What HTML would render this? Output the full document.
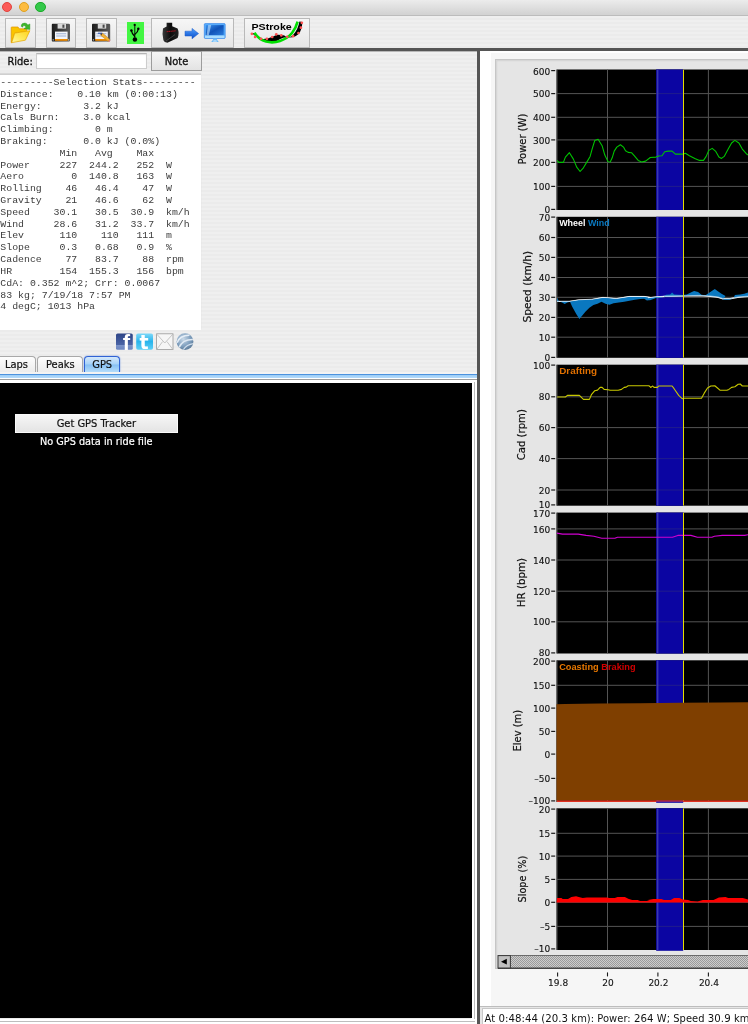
<!DOCTYPE html>
<html><head><meta charset="utf-8"><title>Ride</title>
<style>
*{box-sizing:border-box;margin:0;padding:0}
html,body{width:748px;height:1024px;overflow:hidden}
body{position:relative;font-family:"DejaVu Sans Condensed","DejaVu Sans","Liberation Sans",sans-serif;font-stretch:condensed;background:#ececec;
 background-image:repeating-linear-gradient(to bottom,#efefef 0,#efefef 2px,#ebebeb 2px,#ebebeb 4px);color:#111}
.abs{position:absolute}
#w{position:absolute;left:0;top:0;width:748px;height:1024px;will-change:transform;overflow:hidden}
#title{left:0;top:0;width:748px;height:16px;background:linear-gradient(#ececec,#d3d3d3 94%);border-bottom:1px solid #bcbcbc}
.tl{position:absolute;top:1.6px;width:10.4px;height:10.4px;border-radius:50%}
.tbtn{position:absolute;top:18px;height:29.5px;border:1px solid #b9b9b9;background:linear-gradient(#f6f6f6,#e6e6e6);}
#hline{left:0;top:48px;width:748px;height:3px;background:#555}
#vline{left:477px;top:48px;width:3px;height:976px;background:#555}
#right{left:480px;top:51.4px;width:268px;height:973px;background:#fff}
#cbox{left:495.3px;top:59px;width:260px;height:910px;background:#e5e5e5;border:1.4px solid #c6c6c6;box-shadow:inset 0 0 0 1.3px #d6d6d6}
#xax{left:491px;top:53.4px;width:260px;height:953px;background:#f6f6f6}
#status{left:480px;top:1006px;width:268px;height:18px;background:#e6e6e6;border-top:1.5px solid #bdbdbd}
#sfield{left:482px;top:1008px;width:270px;height:18px;background:#fff;border:1px solid #c8c8c8;font:11px "DejaVu Sans Condensed","DejaVu Sans","Liberation Sans",sans-serif;white-space:nowrap;padding:3px 0 0 1.6px;color:#111;letter-spacing:0.06px;font-stretch:condensed}
#sfield i{font-style:normal;font-stretch:normal;font-size:10.2px;font-family:"DejaVu Sans","Liberation Sans",sans-serif}
#ride{left:7.4px;top:55px;font-size:11px;color:#111;-webkit-text-stroke:0.3px #111}
#rfield{left:35.5px;top:53.4px;width:111.4px;height:15.6px;background:#fff;border:1px solid #cdcdcd;border-top-color:#b4b4b4;box-shadow:inset 0 1px 1px #e4e4e4}
#note{left:151.4px;top:51.4px;width:50.4px;height:19.4px;border:1px solid #9c9c9c;background:linear-gradient(#f5f5f5,#e3e3e3);font-size:11px;text-align:center;line-height:20px;-webkit-text-stroke:0.3px #111}
#stats{left:0;top:74px;width:201px;height:255.5px;background:#fff;border-top:1px solid #cfcfcf;box-shadow:0 -1px 1px #d8d8d8}
#stats pre{font-family:"Liberation Mono","DejaVu Sans Mono",monospace;font-size:9.87px;line-height:11.82px;color:#3c3c3c;padding:1.9px 0 0 0.3px;white-space:pre}
.tab{position:absolute;top:356.4px;height:15.8px;border:1px solid #a8a8a8;border-bottom:none;border-radius:4px 4px 0 0;background:linear-gradient(#fdfdfd,#ececec);font-size:11px;text-align:center;line-height:15.4px;-webkit-text-stroke:0.2px #111}
#gps{left:0;top:382.5px;width:472.2px;height:635.8px;background:#000}
#gbtn{left:15px;top:413.6px;width:162.6px;height:19px;background:linear-gradient(#f6f6f6,#e4e4e4);border:1px solid #fafafa;font-size:11px;text-align:center;line-height:17.4px;color:#111;-webkit-text-stroke:0.2px #111}
#nogps{left:15px;top:435px;width:162.6px;text-align:center;color:#fff;font-size:10.8px;-webkit-text-stroke:0.2px #fff}
svg.chart{position:absolute;left:0;top:0}
svg .tk{font:9px "DejaVu Sans","Liberation Sans",sans-serif;fill:#111;stroke:#111;stroke-width:0.12px}
svg .ttl{font:10px "DejaVu Sans","Liberation Sans",sans-serif;fill:#111;stroke:#111;stroke-width:0.2px}
svg .lg{font:bold 9px "Liberation Sans","DejaVu Sans",sans-serif}
</style></head>
<body>
<div id="w">
<div id="title" class="abs">
 <div class="tl" style="left:1.8px;background:#fc5b57;border:0.5px solid #e0443e"></div>
 <div class="tl" style="left:18.5px;background:#fdbc40;border:0.5px solid #dea123"></div>
 <div class="tl" style="left:35.4px;background:#34c84a;border:0.5px solid #1aab29"></div>
</div>
<div class="tbtn" style="left:5.2px;width:30.8px"></div>
<div class="tbtn" style="left:46.2px;width:30px"></div>
<div class="tbtn" style="left:86.4px;width:30.6px"></div>
<div class="tbtn" style="left:151.2px;width:82.6px"></div>
<div class="tbtn" style="left:244.4px;width:66px"></div>
<div class="abs" style="left:127px;top:22px;width:17px;height:22px;background:#42f642"></div>
<svg class="abs" style="left:0;top:0" width="748" height="52" viewBox="0 0 748 52">
<defs>
<linearGradient id="fy" x1="0" y1="1" x2="1" y2="0"><stop offset="0" stop-color="#fff9a8"/><stop offset="0.45" stop-color="#ffe95a"/><stop offset="1" stop-color="#ffd21a"/></linearGradient>
<linearGradient id="fb" x1="0" y1="0" x2="1" y2="0"><stop offset="0" stop-color="#1c1c1c"/><stop offset="0.5" stop-color="#3c3c3c"/><stop offset="1" stop-color="#5c5c5c"/></linearGradient>
<linearGradient id="mon" x1="0" y1="0" x2="1" y2="1"><stop offset="0" stop-color="#3a92ee"/><stop offset="0.5" stop-color="#0f52b8"/><stop offset="1" stop-color="#2a7cdc"/></linearGradient>
<linearGradient id="arr" x1="0" y1="0" x2="0" y2="1"><stop offset="0" stop-color="#4ea0ff"/><stop offset="1" stop-color="#0a4cc8"/></linearGradient>
<linearGradient id="dev" x1="0" y1="0" x2="1" y2="0"><stop offset="0" stop-color="#3a3a3a"/><stop offset="0.5" stop-color="#0c0c0c"/><stop offset="1" stop-color="#222"/></linearGradient>

</defs>
<!-- folder -->
<path d="M11.2,27.5 Q11.2,27 11.8,27 H18 L19.2,28.8 H26.2 Q26.8,28.8 26.8,29.6 V31.4 L14.7,33.2 L11.7,42.7 H11.2Z" fill="#fac400" stroke="#dd9400" stroke-width="0.7"/>
<path d="M14.7,33.1 L29.9,30.7 L25.4,40.2 L11.7,42.7Z" fill="url(#fy)" stroke="#e6a600" stroke-width="0.7"/>
<path d="M21.1,26.2 Q21.4,22.8 25,23 Q27.2,23.3 27.8,25 L29.9,23.9 L29.9,29.5 L23.9,28.7 L26,27.2 Q25.4,25.5 23.9,25.5 Q22.6,25.7 22.8,27.2Z" fill="#3eb62c" stroke="#2c9222" stroke-width="0.4"/>
<!-- floppies -->
<g transform="translate(51.8,23.8)">
 <path d="M0.8,0 H17 Q18.2,0 18.2,1.2 V16.6 Q18.2,17.6 17,17.6 H0.8 Q0,17.6 0,16.6 V1 Q0,0 0.8,0Z" fill="url(#fb)"/>
 <rect x="5.8" y="0" width="8.4" height="4.8" fill="#d9d9d9"/>
 <rect x="10.6" y="0.8" width="2" height="3.2" fill="#4a4a4a"/>
 <rect x="3.2" y="7.8" width="12.6" height="7.6" fill="#f4f6fa"/>
 <rect x="4.4" y="9.6" width="10" height="0.8" fill="#8aa0c8"/>
 <rect x="4.4" y="11.8" width="10" height="0.8" fill="#8aa0c8"/>
 <rect x="3.2" y="15.2" width="12.6" height="1.8" fill="#f08c00"/>
 <rect x="0.8" y="15.6" width="1.2" height="1" fill="#ddd"/><rect x="16.2" y="15.6" width="1.2" height="1" fill="#ddd"/>
</g>
<g transform="translate(92,23.8)">
 <path d="M0.8,0 H17 Q18.2,0 18.2,1.2 V16.6 Q18.2,17.6 17,17.6 H0.8 Q0,17.6 0,16.6 V1 Q0,0 0.8,0Z" fill="url(#fb)"/>
 <rect x="5.8" y="0" width="8.4" height="4.8" fill="#d9d9d9"/>
 <rect x="10.6" y="0.8" width="2" height="3.2" fill="#4a4a4a"/>
 <rect x="3.2" y="7.8" width="12.6" height="7.6" fill="#f4f6fa"/>
 <rect x="4.4" y="9.6" width="10" height="0.8" fill="#8aa0c8"/>
 <rect x="4.4" y="11.8" width="10" height="0.8" fill="#8aa0c8"/>
 <rect x="3.2" y="15.2" width="12.6" height="1.8" fill="#f08c00"/>
 <rect x="0.8" y="15.6" width="1.2" height="1" fill="#ddd"/><rect x="16.2" y="15.6" width="1.2" height="1" fill="#ddd"/>
</g>
<path d="M100.6,33.6 L102.6,33.2 L109.8,39.4 L108.2,41.4 L101,35.6Z" fill="#f2b234" stroke="#b87818" stroke-width="0.5"/>
<path d="M100.6,33.6 L102.6,33.2 L101,35.6Z" fill="#333"/>
<path d="M109.8,39.4 L110.4,40.6 L109.4,41.8 L108.2,41.4Z" fill="#e87a8a"/>
<path d="M98,33.2 h4" stroke="#2a50b0" stroke-width="1"/>
<!-- usb -->
<g stroke="#000" fill="none" stroke-linecap="round">
<path d="M134.8,25.4 V37.4" stroke-width="0.9"/>
<path d="M131.5,31 Q131.9,33.6 134.6,36.2" stroke-width="1.3"/>
<path d="M138.3,29.2 Q138,31.8 134.9,34.2" stroke-width="1.3"/>
</g>
<circle cx="134.9" cy="39.5" r="2.25" fill="#000"/>
<circle cx="131.4" cy="30.5" r="1.25" fill="#000"/>
<circle cx="138.3" cy="28.7" r="1.25" fill="#000"/>
<circle cx="134.7" cy="24.9" r="1.15" fill="#000"/>
<!-- device -->
<path d="M166.6,22.8 H172.2 V26.2 L177.6,28.4 Q179.6,33 177.6,38 L167.4,42.8 Q164.2,42.6 163.4,40.2 Q161.8,34 163,28.4 L166.6,26.4Z" fill="url(#dev)"/>
<path d="M166,41 L175,34.6" stroke="#5a5a5a" stroke-width="0.9" stroke-opacity="0.7"/>
<path d="M166.6,31.7 L175.6,30.8" stroke="#a81420" stroke-width="1.1" stroke-dasharray="1.5 0.4"/>
<!-- arrow -->
<path d="M185,31.2 H192 V28.4 L198.6,33.6 L192,38.8 V36 H185Z" fill="url(#arr)" stroke="#1a58c8" stroke-width="0.5"/>
<!-- monitor -->
<rect x="204.3" y="23.6" width="20.9" height="14.8" rx="0.9" fill="#58aefc" stroke="#2a7ae6" stroke-width="0.6"/>
<rect x="205.8" y="25.1" width="17.9" height="10.2" fill="url(#mon)"/>
<rect x="205" y="35.5" width="19.5" height="2.5" fill="#a8dcff"/>
<path d="M208.2,25.1 h3 l-2.4,10.2 h-2.3Z" fill="#c4e4ff" fill-opacity="0.6"/>
<path d="M213.2,38.4 h3.6 l0.4,1.6 l1.6,2 h-7.6 l1.6,-2Z" fill="#6cbcfa"/>
<path d="M213.6,40.6 h2.8 l0.6,0.9 h-4Z" fill="#e6f4ff"/>
<!-- pstroke -->
<path d="M254,33 Q258,39 266,41.4 Q270,42.8 275,42 Q280,39 284,37.6 Q290,38 293,35 Q298,30 299.4,21.6 L302.4,22 Q302,30 298.6,34 Q294,38.4 287,37.4 Q284,34.6 281,35 Q277,33.8 273,36.6 Q268,39.4 262,39 Q256,37 252.4,33.4Z" fill="#000"/>
<path d="M254.4,32.8 Q258.6,39.4 266,41.6 Q273,43.4 280,41 Q287.6,38.4 292,33 Q296,28 297.6,21.6" fill="none" stroke="#00e000" stroke-width="2.6"/>
<g fill="#ff5252">
<circle cx="251.9" cy="33.8" r="1.35"/><circle cx="255.1" cy="37" r="1.35"/><circle cx="261" cy="38.8" r="1.35"/><circle cx="266.9" cy="38.8" r="1.35"/><circle cx="272.2" cy="37" r="1.35"/><circle cx="276.3" cy="34.3" r="1.35"/><circle cx="281.3" cy="35.4" r="1.35"/><circle cx="287.2" cy="36.8" r="1.35"/><circle cx="293.1" cy="36.2" r="1.35"/><circle cx="298.4" cy="33" r="1.35"/><circle cx="300.9" cy="27.7" r="1.35"/><circle cx="301.8" cy="22.8" r="1.35"/>
</g>
<text x="251.4" y="30.2" font-family="Liberation Sans, sans-serif" font-weight="bold" font-size="9.8" textLength="40.4" lengthAdjust="spacingAndGlyphs" fill="#000">PStroke</text>
</svg>

<div id="hline" class="abs"></div>
<div class="abs" style="left:0;top:51px;width:748px;height:1px;background:rgba(85,85,85,0.35)"></div>
<div id="ride" class="abs">Ride:</div>
<div id="rfield" class="abs"></div>
<div id="note" class="abs">Note</div>
<div id="stats" class="abs"><pre>---------Selection Stats---------
Distance:    0.10 km (0:00:13)
Energy:       3.2 kJ
Cals Burn:    3.0 kcal
Climbing:       0 m
Braking:      0.0 kJ (0.0%)
          Min   Avg    Max
Power     227  244.2   252  W
Aero        0  140.8   163  W
Rolling    46   46.4    47  W
Gravity    21   46.6    62  W
Speed    30.1   30.5  30.9  km/h
Wind     28.6   31.2  33.7  km/h
Elev      110    110   111  m
Slope     0.3   0.68   0.9  %
Cadence    77   83.7    88  rpm
HR        154  155.3   156  bpm
CdA: 0.352 m^2; Crr: 0.0067
83 kg; 7/19/18 7:57 PM
4 degC; 1013 hPa</pre></div>
<svg class="abs" style="left:110px;top:328px" width="90" height="28" viewBox="110 328 90 28">
<defs>
<linearGradient id="fbg" x1="0" y1="0" x2="0" y2="1"><stop offset="0" stop-color="#2d4486"/><stop offset="0.7" stop-color="#4a64a6"/><stop offset="0.72" stop-color="#7a92c8"/><stop offset="1" stop-color="#6c86c0"/></linearGradient>
<linearGradient id="twg" x1="0" y1="0" x2="0" y2="1"><stop offset="0" stop-color="#7fd8f8"/><stop offset="0.5" stop-color="#28b4ec"/><stop offset="1" stop-color="#5fd0f6"/></linearGradient>
<radialGradient id="glb" cx="0.4" cy="0.35" r="0.7"><stop offset="0" stop-color="#c9d9e8"/><stop offset="0.6" stop-color="#7f9fbe"/><stop offset="1" stop-color="#5a7896"/></radialGradient>
</defs>
<rect x="116" y="333.4" width="16.8" height="16.4" rx="1.6" fill="url(#fbg)"/>
<text x="122.8" y="350.2" font-family="Liberation Sans, sans-serif" font-weight="bold" font-size="22" fill="#fff">f</text>
<rect x="136.2" y="333.4" width="16.8" height="16.4" rx="1.8" fill="url(#twg)"/>
<text x="139.4" y="348.6" font-family="DejaVu Sans, sans-serif" font-stretch="normal" font-weight="bold" font-size="19" fill="#fff">t</text>
<rect x="156.6" y="333.8" width="16.4" height="15.8" fill="#f6f6f6" stroke="#9a9a9a" stroke-width="0.8"/>
<path d="M156.8,334.2 L164.8,343 L172.8,334.2 M156.8,349.4 L162.6,341.6 M172.8,349.4 L167,341.6" fill="none" stroke="#b8b8b8" stroke-width="0.8"/>
<circle cx="185" cy="341.6" r="8.4" fill="url(#glb)"/>
<clipPath id="gc"><circle cx="185" cy="341.6" r="8.4"/></clipPath>
<g clip-path="url(#gc)"><g transform="rotate(-28 185 341.6)">
<path d="M177.4,339 Q183,333.6 192,338" fill="none" stroke="#e4edf6" stroke-width="1.6"/>
<path d="M177,344 Q184,338.4 193.2,343.6" fill="none" stroke="#dfe9f3" stroke-width="1.6"/>
<path d="M179.6,348 Q185,345 191.4,347.4" fill="none" stroke="#d0deec" stroke-width="1.2"/>
</g></g>
</svg>

<div class="tab" style="left:-3px;width:38.8px;padding-left:0px">Laps</div>
<div class="tab" style="left:37.4px;width:45.8px">Peaks</div>
<div class="tab" style="left:84px;width:36.4px;border-color:#2f62d4;background:linear-gradient(#d4e8fb,#a6d2f8 48%,#86c0f4 52%,#b4dcfa);box-shadow:0 0 1.5px #3b6fdc">GPS</div>
<div class="abs" style="left:0;top:372.4px;width:477px;height:1.6px;background:#f3f3f3"></div>
<div class="abs" style="left:0;top:374px;width:477px;height:1.1px;background:#4c92de"></div>
<div class="abs" style="left:0;top:375.1px;width:477px;height:3px;background:linear-gradient(#9ccdf6,#b4dafa)"></div>
<div class="abs" style="left:0;top:378.1px;width:477px;height:5px;background:#fff"></div>
<div class="abs" style="left:0;top:379.3px;width:477px;height:1.1px;background:#9c9c9c"></div>
<div class="abs" style="left:471.4px;top:382px;width:5.6px;height:642px;background:#fff"></div>
<div class="abs" style="left:474px;top:382px;width:1px;height:640px;background:#bdbdbd"></div>
<div class="abs" style="left:0;top:1019px;width:477px;height:5px;background:#fff"></div>
<div class="abs" style="left:0;top:1021px;width:475px;height:1px;background:#bdbdbd"></div>
<div id="gps" class="abs"></div>
<div id="gbtn" class="abs">Get GPS Tracker</div>
<div id="nogps" class="abs">No GPS data in ride file</div>
<div id="vline" class="abs"></div>
<div id="right" class="abs"></div>
<div id="xax" class="abs"></div>
<div id="cbox" class="abs"></div>
<div id="status" class="abs"></div>
<div id="sfield" class="abs">At <i>0:48:44</i> (<i>20.3</i> km): Power: <i>264</i> W; Speed <i>30.9</i> km/h; Wind <i>31.0</i> km/h</div>
<svg class="chart" width="748" height="1024" viewBox="0 0 748 1024">
<defs><pattern id="dith" width="2" height="2" patternUnits="userSpaceOnUse"><rect width="2" height="2" fill="#cccccc"/><rect width="1" height="1" fill="#9a9a9a"/><rect x="1" y="1" width="1" height="1" fill="#9a9a9a"/></pattern>
<clipPath id="cp0"><rect x="556.5" y="69.5" width="200" height="140.5"/></clipPath>
<clipPath id="cp1"><rect x="556.5" y="216.8" width="200" height="141.0"/></clipPath>
<clipPath id="cp2"><rect x="556.5" y="364.7" width="200" height="141.0"/></clipPath>
<clipPath id="cp3"><rect x="556.5" y="512.6" width="200" height="140.9"/></clipPath>
<clipPath id="cp4"><rect x="556.5" y="660.3" width="200" height="141.7"/></clipPath>
<clipPath id="cp5"><rect x="556.5" y="808.3" width="200" height="141.7"/></clipPath>
</defs>
<rect x="556.5" y="69.5" width="200" height="140.5" fill="#000"/>
<rect x="656.2" y="69.5" width="27" height="140.5" fill="#0b06a2"/>
<g clip-path="url(#cp0)">
<line x1="556.5" x2="748" y1="93.6" y2="93.6" stroke="#545454" stroke-width="1"/>
<line x1="556.5" x2="748" y1="117.3" y2="117.3" stroke="#545454" stroke-width="1"/>
<line x1="556.5" x2="748" y1="139.9" y2="139.9" stroke="#545454" stroke-width="1"/>
<line x1="556.5" x2="748" y1="162.4" y2="162.4" stroke="#545454" stroke-width="1"/>
<line x1="556.5" x2="748" y1="186.4" y2="186.4" stroke="#545454" stroke-width="1"/>
<line x1="607.5" x2="607.5" y1="69.5" y2="210.0" stroke="#545454" stroke-width="1"/>
<line x1="708.4" x2="708.4" y1="69.5" y2="210.0" stroke="#545454" stroke-width="1"/>
<line x1="557" x2="557" y1="69.5" y2="210.0" stroke="#545454" stroke-width="1"/>
<rect x="656.2" y="69.5" width="27" height="140.5" fill="#0b06a2" fill-opacity="0.72"/>
<line x1="657.6" x2="657.6" y1="69.5" y2="210.0" stroke="#3a38b0" stroke-width="1.6"/>
<path d="M557.1,160.4 L558.7,162.4 L563.4,162.4 L565.4,157.1 L569.4,152.7 L573.4,159.1 L576.7,167.1 L580.1,171.5 L583.4,167.8 L587.4,161.1 L590.1,156.4 L592.1,149.1 L594.8,140.4 L598.1,139.3 L602.1,145.7 L604.8,155.1 L608.1,161.8 L610.2,162.0 L612.2,157.8 L614.2,151.1 L616.8,147.1 L620.4,144.7 L623.5,147.1 L625.5,150.7 L628.2,152.4 L631.5,152.7 L634.2,155.7 L638.2,160.4 L641.6,162.0 L645.6,161.1 L650.3,157.5 L650.0,157.5 L656.0,157.1 L658.7,156.0 L662.0,155.7 L664.7,151.7 L668.1,151.1 L672.1,151.1 L675.4,154.1 L683.4,154.1 L685.4,153.3 L689.4,155.7 L694.8,158.4 L699.5,160.4 L703.5,160.4 L706.2,156.4 L708.8,150.4 L712.2,148.4 L715.5,151.1 L718.9,157.1 L721.5,158.4 L724.2,156.4 L728.2,149.1 L731.6,143.0 L734.9,140.4 L738.9,143.0 L742.3,149.1 L746.3,153.7 L749.6,156.0" fill="none" stroke="#00c400" stroke-width="1.1" stroke-linejoin="round"/>
<line x1="683.5" x2="683.5" y1="69.5" y2="210.0" stroke="#e6de00" stroke-width="1"/>
</g>
<line x1="551.2" x2="555.2" y1="70.6" y2="70.6" stroke="#1a1a1a" stroke-width="1.2"/>
<text class="tk" x="550.2" y="74.9" text-anchor="end">600</text>
<line x1="551.2" x2="555.2" y1="93.6" y2="93.6" stroke="#1a1a1a" stroke-width="1.2"/>
<text class="tk" x="550.2" y="97.2" text-anchor="end">500</text>
<line x1="551.2" x2="555.2" y1="117.3" y2="117.3" stroke="#1a1a1a" stroke-width="1.2"/>
<text class="tk" x="550.2" y="120.9" text-anchor="end">400</text>
<line x1="551.2" x2="555.2" y1="139.9" y2="139.9" stroke="#1a1a1a" stroke-width="1.2"/>
<text class="tk" x="550.2" y="143.5" text-anchor="end">300</text>
<line x1="551.2" x2="555.2" y1="162.4" y2="162.4" stroke="#1a1a1a" stroke-width="1.2"/>
<text class="tk" x="550.2" y="166.0" text-anchor="end">200</text>
<line x1="551.2" x2="555.2" y1="186.4" y2="186.4" stroke="#1a1a1a" stroke-width="1.2"/>
<text class="tk" x="550.2" y="190.0" text-anchor="end">100</text>
<line x1="551.2" x2="555.2" y1="209.4" y2="209.4" stroke="#1a1a1a" stroke-width="1.2"/>
<text class="tk" x="550.2" y="212.7" text-anchor="end">0</text>
<text class="ttl" transform="translate(525.6,164.6) rotate(-90)" textLength="50.9" lengthAdjust="spacingAndGlyphs">Power (W)</text>
<rect x="556.5" y="216.8" width="200" height="141.0" fill="#000"/>
<rect x="656.2" y="216.8" width="27" height="141.0" fill="#0b06a2"/>
<g clip-path="url(#cp1)">
<line x1="556.5" x2="748" y1="237.5" y2="237.5" stroke="#545454" stroke-width="1"/>
<line x1="556.5" x2="748" y1="257.4" y2="257.4" stroke="#545454" stroke-width="1"/>
<line x1="556.5" x2="748" y1="277.5" y2="277.5" stroke="#545454" stroke-width="1"/>
<line x1="556.5" x2="748" y1="297.3" y2="297.3" stroke="#545454" stroke-width="1"/>
<line x1="556.5" x2="748" y1="317.4" y2="317.4" stroke="#545454" stroke-width="1"/>
<line x1="556.5" x2="748" y1="337.2" y2="337.2" stroke="#545454" stroke-width="1"/>
<line x1="607.5" x2="607.5" y1="216.8" y2="357.8" stroke="#545454" stroke-width="1"/>
<line x1="708.4" x2="708.4" y1="216.8" y2="357.8" stroke="#545454" stroke-width="1"/>
<line x1="557" x2="557" y1="216.8" y2="357.8" stroke="#545454" stroke-width="1"/>
<rect x="656.2" y="216.8" width="27" height="141.0" fill="#0b06a2" fill-opacity="0.72"/>
<line x1="657.6" x2="657.6" y1="216.8" y2="357.8" stroke="#3a38b0" stroke-width="1.6"/>
<path d="M557.1,301.5 L569.4,301.5 L578.7,300.1 L592.1,299.5 L602.8,297.7 L608.1,298.0 L616.2,298.8 L629.5,296.7 L644.2,296.7 L650.3,297.7 L648.0,298.0 L656.0,297.1 L665.4,296.4 L685.4,296.0 L698.8,295.7 L708.2,296.1 L717.5,297.1 L722.9,298.8 L729.6,298.8 L738.9,297.1 L749.6,296.4" fill="none" stroke="#fff" stroke-width="1.2"/>
<path d="M557.1,297.5 L558.7,301.1 L562.0,302.4 L564.7,304.1 L567.4,302.4 L570.0,301.7 L572.1,306.4 L576.1,313.8 L579.4,319.1 L582.1,315.8 L585.4,311.8 L589.4,307.8 L593.4,305.1 L597.5,303.7 L601.5,301.7 L605.5,303.7 L609.5,304.7 L613.5,303.3 L618.8,302.4 L624.2,301.7 L629.5,300.7 L634.9,299.7 L640.2,299.1 L644.2,298.8 L646.9,300.4 L650.3,300.0 L648.0,301.1 L656.0,298.0 L661.4,297.5 L664.0,296.4 L666.0,294.8 L670.1,294.4 L672.1,292.6 L674.1,294.4 L682.8,295.1 L686.8,294.4 L690.8,292.4 L694.1,291.0 L698.1,292.1 L701.5,294.8 L705.5,295.3 L709.5,292.4 L714.8,289.0 L717.5,291.0 L721.5,293.7 L725.5,296.1 L722.9,299.7 L729.6,299.7 L733.6,298.0 L734.9,295.1 L740.2,294.4 L744.3,293.7 L749.6,292.1 L749.6,296.4 L738.9,297.1 L729.6,298.8 L722.9,298.8 L717.5,297.1 L708.2,296.1 L698.8,295.7 L685.4,296.0 L665.4,296.4 L656.0,297.1 L648.0,298.0 L650.3,297.7 L644.2,296.7 L629.5,296.7 L616.2,298.8 L608.1,298.0 L602.8,297.7 L592.1,299.5 L578.7,300.1 L569.4,301.5 L557.1,301.5Z" fill="#0a78c0" fill-rule="nonzero"/>
<path d="M557.1,301.2 L569.4,301.2 L578.7,299.8 L592.1,299.2 L602.8,297.4 L608.1,297.7 L616.2,298.5 L629.5,296.4 L644.2,296.4 L650.3,297.4 L648.0,297.7 L656.0,296.8 L665.4,296.1 L685.4,295.7 L698.8,295.4 L708.2,295.8 L717.5,296.8 L722.9,298.5 L729.6,298.5 L738.9,296.8 L749.6,296.1" fill="none" stroke="#fff" stroke-width="0.9" stroke-opacity="0.6"/>
<line x1="683.5" x2="683.5" y1="216.8" y2="357.8" stroke="#e6de00" stroke-width="1"/>
</g>
<line x1="551.2" x2="555.2" y1="217.1" y2="217.1" stroke="#1a1a1a" stroke-width="1.2"/>
<text class="tk" x="550.2" y="221.4" text-anchor="end">70</text>
<line x1="551.2" x2="555.2" y1="237.5" y2="237.5" stroke="#1a1a1a" stroke-width="1.2"/>
<text class="tk" x="550.2" y="241.1" text-anchor="end">60</text>
<line x1="551.2" x2="555.2" y1="257.4" y2="257.4" stroke="#1a1a1a" stroke-width="1.2"/>
<text class="tk" x="550.2" y="261.0" text-anchor="end">50</text>
<line x1="551.2" x2="555.2" y1="277.5" y2="277.5" stroke="#1a1a1a" stroke-width="1.2"/>
<text class="tk" x="550.2" y="281.1" text-anchor="end">40</text>
<line x1="551.2" x2="555.2" y1="297.3" y2="297.3" stroke="#1a1a1a" stroke-width="1.2"/>
<text class="tk" x="550.2" y="300.9" text-anchor="end">30</text>
<line x1="551.2" x2="555.2" y1="317.4" y2="317.4" stroke="#1a1a1a" stroke-width="1.2"/>
<text class="tk" x="550.2" y="321.0" text-anchor="end">20</text>
<line x1="551.2" x2="555.2" y1="337.2" y2="337.2" stroke="#1a1a1a" stroke-width="1.2"/>
<text class="tk" x="550.2" y="340.8" text-anchor="end">10</text>
<line x1="551.2" x2="555.2" y1="357.4" y2="357.4" stroke="#1a1a1a" stroke-width="1.2"/>
<text class="tk" x="550.2" y="360.7" text-anchor="end">0</text>
<text class="ttl" transform="translate(531.1,322.4) rotate(-90)" textLength="71.6" lengthAdjust="spacingAndGlyphs">Speed (km/h)</text>
<rect x="556.5" y="364.7" width="200" height="141.0" fill="#000"/>
<rect x="656.2" y="364.7" width="27" height="141.0" fill="#0b06a2"/>
<g clip-path="url(#cp2)">
<line x1="556.5" x2="748" y1="396.8" y2="396.8" stroke="#545454" stroke-width="1"/>
<line x1="556.5" x2="748" y1="427.6" y2="427.6" stroke="#545454" stroke-width="1"/>
<line x1="556.5" x2="748" y1="458.6" y2="458.6" stroke="#545454" stroke-width="1"/>
<line x1="556.5" x2="748" y1="490.0" y2="490.0" stroke="#545454" stroke-width="1"/>
<line x1="607.5" x2="607.5" y1="364.7" y2="505.7" stroke="#545454" stroke-width="1"/>
<line x1="708.4" x2="708.4" y1="364.7" y2="505.7" stroke="#545454" stroke-width="1"/>
<line x1="557" x2="557" y1="364.7" y2="505.7" stroke="#545454" stroke-width="1"/>
<rect x="656.2" y="364.7" width="27" height="141.0" fill="#0b06a2" fill-opacity="0.72"/>
<line x1="657.6" x2="657.6" y1="364.7" y2="505.7" stroke="#3a38b0" stroke-width="1.6"/>
<path d="M557.1,397.0 L565.4,397.0 L567.4,395.4 L579.4,395.4 L583.4,399.4 L589.4,399.4 L591.4,394.7 L594.8,390.7 L597.5,390.1 L600.1,387.4 L602.1,387.4 L604.1,389.4 L608.1,389.7 L610.2,390.3 L618.2,390.3 L621.5,389.4 L624.2,387.4 L626.2,387.1 L628.2,385.8 L648.9,385.8 L650.9,387.4 L650.7,387.4 L652.7,386.0 L654.0,387.4 L657.4,387.4 L658.7,386.0 L672.1,386.0 L674.1,388.7 L678.7,395.4 L682.1,398.7 L684.1,398.3 L701.5,398.3 L704.1,393.4 L707.5,388.0 L710.8,386.0 L714.8,385.8 L717.5,388.0 L720.2,390.3 L726.9,390.3 L728.9,389.4 L731.6,387.4 L734.9,386.7 L738.2,384.3 L740.2,384.0 L742.3,386.0 L749.6,386.0" fill="none" stroke="#c8c800" stroke-width="1.1" stroke-linejoin="round"/>
<line x1="683.5" x2="683.5" y1="364.7" y2="505.7" stroke="#e6de00" stroke-width="1"/>
</g>
<line x1="551.2" x2="555.2" y1="365.1" y2="365.1" stroke="#1a1a1a" stroke-width="1.2"/>
<text class="tk" x="550.2" y="369.4" text-anchor="end">100</text>
<line x1="551.2" x2="555.2" y1="396.8" y2="396.8" stroke="#1a1a1a" stroke-width="1.2"/>
<text class="tk" x="550.2" y="400.4" text-anchor="end">80</text>
<line x1="551.2" x2="555.2" y1="427.6" y2="427.6" stroke="#1a1a1a" stroke-width="1.2"/>
<text class="tk" x="550.2" y="431.2" text-anchor="end">60</text>
<line x1="551.2" x2="555.2" y1="458.6" y2="458.6" stroke="#1a1a1a" stroke-width="1.2"/>
<text class="tk" x="550.2" y="462.2" text-anchor="end">40</text>
<line x1="551.2" x2="555.2" y1="490.0" y2="490.0" stroke="#1a1a1a" stroke-width="1.2"/>
<text class="tk" x="550.2" y="493.6" text-anchor="end">20</text>
<line x1="551.2" x2="555.2" y1="504.9" y2="504.9" stroke="#1a1a1a" stroke-width="1.2"/>
<text class="tk" x="550.2" y="508.2" text-anchor="end">10</text>
<text class="ttl" transform="translate(525.1,460.3) rotate(-90)" textLength="51.2" lengthAdjust="spacingAndGlyphs">Cad (rpm)</text>
<rect x="556.5" y="512.6" width="200" height="140.9" fill="#000"/>
<rect x="656.2" y="512.6" width="27" height="140.9" fill="#0b06a2"/>
<g clip-path="url(#cp3)">
<line x1="556.5" x2="748" y1="528.9" y2="528.9" stroke="#545454" stroke-width="1"/>
<line x1="556.5" x2="748" y1="560.0" y2="560.0" stroke="#545454" stroke-width="1"/>
<line x1="556.5" x2="748" y1="591.2" y2="591.2" stroke="#545454" stroke-width="1"/>
<line x1="556.5" x2="748" y1="621.8" y2="621.8" stroke="#545454" stroke-width="1"/>
<line x1="607.5" x2="607.5" y1="512.6" y2="653.5" stroke="#545454" stroke-width="1"/>
<line x1="708.4" x2="708.4" y1="512.6" y2="653.5" stroke="#545454" stroke-width="1"/>
<line x1="557" x2="557" y1="512.6" y2="653.5" stroke="#545454" stroke-width="1"/>
<rect x="656.2" y="512.6" width="27" height="140.9" fill="#0b06a2" fill-opacity="0.72"/>
<line x1="657.6" x2="657.6" y1="512.6" y2="653.5" stroke="#3a38b0" stroke-width="1.6"/>
<path d="M556.7,533.1 L562.5,534.1 L578.2,534.1 L586.1,535.4 L593.9,536.2 L601.8,538.3 L614.9,538.3 L617.5,537.3 L672.5,537.3 L677.8,535.4 L690.9,535.4 L697.4,537.3 L711.9,537.3 L714.5,536.2 L722.3,535.4 L744.6,535.4 L751.2,534.1" fill="none" stroke="#d000d0" stroke-width="1.1" stroke-linejoin="round"/>
<line x1="683.5" x2="683.5" y1="512.6" y2="653.5" stroke="#e6de00" stroke-width="1"/>
</g>
<line x1="551.2" x2="555.2" y1="513.1" y2="513.1" stroke="#1a1a1a" stroke-width="1.2"/>
<text class="tk" x="550.2" y="517.4" text-anchor="end">170</text>
<line x1="551.2" x2="555.2" y1="528.9" y2="528.9" stroke="#1a1a1a" stroke-width="1.2"/>
<text class="tk" x="550.2" y="532.5" text-anchor="end">160</text>
<line x1="551.2" x2="555.2" y1="560.0" y2="560.0" stroke="#1a1a1a" stroke-width="1.2"/>
<text class="tk" x="550.2" y="563.6" text-anchor="end">140</text>
<line x1="551.2" x2="555.2" y1="591.2" y2="591.2" stroke="#1a1a1a" stroke-width="1.2"/>
<text class="tk" x="550.2" y="594.8" text-anchor="end">120</text>
<line x1="551.2" x2="555.2" y1="621.8" y2="621.8" stroke="#1a1a1a" stroke-width="1.2"/>
<text class="tk" x="550.2" y="625.4" text-anchor="end">100</text>
<line x1="551.2" x2="555.2" y1="652.9" y2="652.9" stroke="#1a1a1a" stroke-width="1.2"/>
<text class="tk" x="550.2" y="656.2" text-anchor="end">80</text>
<text class="ttl" transform="translate(525.1,607.3) rotate(-90)" textLength="49.4" lengthAdjust="spacingAndGlyphs">HR (bpm)</text>
<rect x="556.5" y="660.3" width="200" height="141.7" fill="#000"/>
<rect x="656.2" y="660.3" width="27" height="142.5" fill="#0b06a2"/>
<g clip-path="url(#cp4)">
<line x1="556.5" x2="748" y1="685.3" y2="685.3" stroke="#545454" stroke-width="1"/>
<line x1="556.5" x2="748" y1="708.1" y2="708.1" stroke="#545454" stroke-width="1"/>
<line x1="556.5" x2="748" y1="731.4" y2="731.4" stroke="#545454" stroke-width="1"/>
<line x1="556.5" x2="748" y1="754.1" y2="754.1" stroke="#545454" stroke-width="1"/>
<line x1="556.5" x2="748" y1="778.4" y2="778.4" stroke="#545454" stroke-width="1"/>
<line x1="607.5" x2="607.5" y1="660.3" y2="802.0" stroke="#545454" stroke-width="1"/>
<line x1="708.4" x2="708.4" y1="660.3" y2="802.0" stroke="#545454" stroke-width="1"/>
<line x1="557" x2="557" y1="660.3" y2="802.0" stroke="#545454" stroke-width="1"/>
<rect x="656.2" y="660.3" width="27" height="141.7" fill="#0b06a2" fill-opacity="0.72"/>
<line x1="657.6" x2="657.6" y1="660.3" y2="802.0" stroke="#3a38b0" stroke-width="1.6"/>
<line x1="683.5" x2="683.5" y1="660.3" y2="802.0" stroke="#e6de00" stroke-width="1"/>
<path d="M556.0,704.3 L565.0,704.0 L600.0,703.6 L640.0,703.2 L680.0,702.8 L720.0,702.5 L760.0,702.0 L760.0,800.6 L556.0,800.6Z" fill="#7f3f00"/>
<rect x="556.5" y="800.4" width="200" height="1.6" fill="#e03020"/>
<rect x="656.2" y="801.4" width="27" height="0.8" fill="#5020a0"/>
</g>
<line x1="551.2" x2="555.2" y1="661.1" y2="661.1" stroke="#1a1a1a" stroke-width="1.2"/>
<text class="tk" x="550.2" y="665.4" text-anchor="end">200</text>
<line x1="551.2" x2="555.2" y1="685.3" y2="685.3" stroke="#1a1a1a" stroke-width="1.2"/>
<text class="tk" x="550.2" y="688.9" text-anchor="end">150</text>
<line x1="551.2" x2="555.2" y1="708.1" y2="708.1" stroke="#1a1a1a" stroke-width="1.2"/>
<text class="tk" x="550.2" y="711.7" text-anchor="end">100</text>
<line x1="551.2" x2="555.2" y1="731.4" y2="731.4" stroke="#1a1a1a" stroke-width="1.2"/>
<text class="tk" x="550.2" y="735.0" text-anchor="end">50</text>
<line x1="551.2" x2="555.2" y1="754.1" y2="754.1" stroke="#1a1a1a" stroke-width="1.2"/>
<text class="tk" x="550.2" y="757.7" text-anchor="end">0</text>
<line x1="551.2" x2="555.2" y1="778.4" y2="778.4" stroke="#1a1a1a" stroke-width="1.2"/>
<text class="tk" x="550.2" y="782.0" text-anchor="end">–50</text>
<line x1="551.2" x2="555.2" y1="800.9" y2="800.9" stroke="#1a1a1a" stroke-width="1.2"/>
<text class="tk" x="550.2" y="804.2" text-anchor="end">–100</text>
<text class="ttl" transform="translate(520.6,751.5) rotate(-90)" textLength="41.6" lengthAdjust="spacingAndGlyphs">Elev (m)</text>
<rect x="556.5" y="808.3" width="200" height="141.7" fill="#000"/>
<rect x="656.2" y="808.3" width="27" height="142.5" fill="#0b06a2"/>
<g clip-path="url(#cp5)">
<line x1="556.5" x2="748" y1="833.3" y2="833.3" stroke="#545454" stroke-width="1"/>
<line x1="556.5" x2="748" y1="856.1" y2="856.1" stroke="#545454" stroke-width="1"/>
<line x1="556.5" x2="748" y1="879.4" y2="879.4" stroke="#545454" stroke-width="1"/>
<line x1="556.5" x2="748" y1="902.3" y2="902.3" stroke="#545454" stroke-width="1"/>
<line x1="556.5" x2="748" y1="926.4" y2="926.4" stroke="#545454" stroke-width="1"/>
<line x1="607.5" x2="607.5" y1="808.3" y2="950.0" stroke="#545454" stroke-width="1"/>
<line x1="708.4" x2="708.4" y1="808.3" y2="950.0" stroke="#545454" stroke-width="1"/>
<line x1="557" x2="557" y1="808.3" y2="950.0" stroke="#545454" stroke-width="1"/>
<rect x="656.2" y="808.3" width="27" height="141.7" fill="#0b06a2" fill-opacity="0.72"/>
<line x1="657.6" x2="657.6" y1="808.3" y2="950.0" stroke="#3a38b0" stroke-width="1.6"/>
<line x1="683.5" x2="683.5" y1="808.3" y2="950.0" stroke="#e6de00" stroke-width="1"/>
<path d="M556.0,902.6 L557.1,898.0 L561.4,898.0 L562.7,899.0 L568.0,899.0 L571.4,897.1 L576.1,896.3 L578.7,897.1 L582.7,898.0 L586.8,897.4 L606.8,897.4 L609.5,898.0 L614.8,898.0 L617.5,897.1 L624.9,897.1 L628.2,898.7 L632.2,900.1 L637.6,900.1 L640.2,901.0 L646.9,901.0 L649.6,900.1 L648.0,900.1 L653.3,899.0 L661.4,899.0 L664.0,900.1 L670.7,900.1 L674.1,898.0 L679.4,898.0 L682.8,899.4 L688.1,900.1 L690.8,901.1 L697.5,901.4 L702.8,900.1 L713.5,900.1 L718.9,897.4 L725.5,897.1 L728.2,898.0 L742.9,898.0 L749.6,900.1 L760.0,902.6Z" fill="#ff0000"/>
</g>
<line x1="551.2" x2="555.2" y1="809.1" y2="809.1" stroke="#1a1a1a" stroke-width="1.2"/>
<text class="tk" x="550.2" y="813.4" text-anchor="end">20</text>
<line x1="551.2" x2="555.2" y1="833.3" y2="833.3" stroke="#1a1a1a" stroke-width="1.2"/>
<text class="tk" x="550.2" y="836.9" text-anchor="end">15</text>
<line x1="551.2" x2="555.2" y1="856.1" y2="856.1" stroke="#1a1a1a" stroke-width="1.2"/>
<text class="tk" x="550.2" y="859.7" text-anchor="end">10</text>
<line x1="551.2" x2="555.2" y1="879.4" y2="879.4" stroke="#1a1a1a" stroke-width="1.2"/>
<text class="tk" x="550.2" y="883.0" text-anchor="end">5</text>
<line x1="551.2" x2="555.2" y1="902.3" y2="902.3" stroke="#1a1a1a" stroke-width="1.2"/>
<text class="tk" x="550.2" y="905.9" text-anchor="end">0</text>
<line x1="551.2" x2="555.2" y1="926.4" y2="926.4" stroke="#1a1a1a" stroke-width="1.2"/>
<text class="tk" x="550.2" y="930.0" text-anchor="end">–5</text>
<line x1="551.2" x2="555.2" y1="948.9" y2="948.9" stroke="#1a1a1a" stroke-width="1.2"/>
<text class="tk" x="550.2" y="952.2" text-anchor="end">–10</text>
<text class="ttl" transform="translate(526.1,902.4) rotate(-90)" textLength="46.7" lengthAdjust="spacingAndGlyphs">Slope (%)</text>
<text class="lg" x="559.2" y="225.9" textLength="50.6" lengthAdjust="spacingAndGlyphs"><tspan fill="#fff">Wheel</tspan> <tspan fill="#0a78c0">Wind</tspan></text>
<text class="lg" x="559.2" y="373.8" fill="#e07000" textLength="37.8" lengthAdjust="spacingAndGlyphs">Drafting</text>
<text class="lg" x="559.2" y="669.6" textLength="76.4" lengthAdjust="spacingAndGlyphs"><tspan fill="#e87800">Coasting</tspan> <tspan fill="#d00000">Braking</tspan></text>
<rect x="498" y="955" width="250" height="13.6" fill="url(#dith)"/>
<rect x="498" y="955" width="250" height="1" fill="#6a6a6a"/>
<rect x="498" y="967.6" width="250" height="1.2" fill="#2a2a2a"/>
<rect x="498" y="955.6" width="12.4" height="12.4" fill="#c0c0c0" stroke="#3a3a3a" stroke-width="1"/>
<path d="M501,961.7 L506.8,958.8 L506.8,964.6 Z" fill="#000"/>
<line x1="557.6" x2="557.6" y1="972.4" y2="976.4" stroke="#1a1a1a" stroke-width="1.1"/>
<text class="tk" x="558.1" y="985.9" text-anchor="middle">19.8</text>
<line x1="607.5" x2="607.5" y1="972.4" y2="976.4" stroke="#1a1a1a" stroke-width="1.1"/>
<text class="tk" x="608.0" y="985.9" text-anchor="middle">20</text>
<line x1="657.9" x2="657.9" y1="972.4" y2="976.4" stroke="#1a1a1a" stroke-width="1.1"/>
<text class="tk" x="658.4" y="985.9" text-anchor="middle">20.2</text>
<line x1="708.4" x2="708.4" y1="972.4" y2="976.4" stroke="#1a1a1a" stroke-width="1.1"/>
<text class="tk" x="708.9" y="985.9" text-anchor="middle">20.4</text>
</svg>
</div>
</body></html>
